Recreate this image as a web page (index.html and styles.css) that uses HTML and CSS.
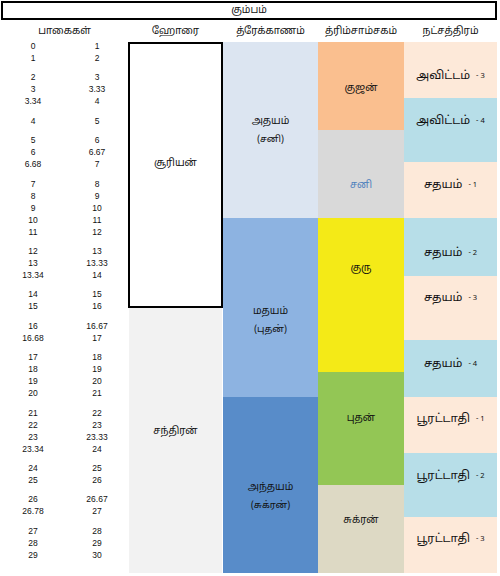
FILE: index.html
```html
<!DOCTYPE html>
<html lang="ta">
<head>
<meta charset="utf-8">
<title>கும்பம்</title>
<link rel="stylesheet" href="styles.css">
</head>
<body>
<div class="page">
  <div class="title">கும்பம்</div>
  <div class="heads">
    <div>பாகைகள்</div>
    <div>ஹோரை</div>
    <div>த்ரேக்காணம்</div>
    <div>த்ரிம்சாம்சகம்</div>
    <div>நட்சத்திரம்</div>
  </div>
  <div class="table">
    <div class="degrees">
      <div class="grp"><div class="r"><span>0</span><span>1</span></div><div class="r"><span>1</span><span>2</span></div></div>
      <div class="grp"><div class="r"><span>2</span><span>3</span></div><div class="r"><span>3</span><span>3.33</span></div><div class="r"><span>3.34</span><span>4</span></div></div>
      <div class="grp"><div class="r"><span>4</span><span>5</span></div></div>
      <div class="grp"><div class="r"><span>5</span><span>6</span></div><div class="r"><span>6</span><span>6.67</span></div><div class="r"><span>6.68</span><span>7</span></div></div>
      <div class="grp"><div class="r"><span>7</span><span>8</span></div><div class="r"><span>8</span><span>9</span></div><div class="r"><span>9</span><span>10</span></div><div class="r"><span>10</span><span>11</span></div><div class="r"><span>11</span><span>12</span></div></div>
      <div class="grp"><div class="r"><span>12</span><span>13</span></div><div class="r"><span>13</span><span>13.33</span></div><div class="r"><span>13.34</span><span>14</span></div></div>
      <div class="grp"><div class="r"><span>14</span><span>15</span></div><div class="r"><span>15</span><span>16</span></div></div>
      <div class="grp"><div class="r"><span>16</span><span>16.67</span></div><div class="r"><span>16.68</span><span>17</span></div></div>
      <div class="grp"><div class="r"><span>17</span><span>18</span></div><div class="r"><span>18</span><span>19</span></div><div class="r"><span>19</span><span>20</span></div><div class="r"><span>20</span><span>21</span></div></div>
      <div class="grp"><div class="r"><span>21</span><span>22</span></div><div class="r"><span>22</span><span>23</span></div><div class="r"><span>23</span><span>23.33</span></div><div class="r"><span>23.34</span><span>24</span></div></div>
      <div class="grp"><div class="r"><span>24</span><span>25</span></div><div class="r"><span>25</span><span>26</span></div></div>
      <div class="grp"><div class="r"><span>26</span><span>26.67</span></div><div class="r"><span>26.78</span><span>27</span></div></div>
      <div class="grp"><div class="r"><span>27</span><span>28</span></div><div class="r"><span>28</span><span>29</span></div><div class="r"><span>29</span><span>30</span></div></div>
    </div>
    <div class="hora">
      <div class="cell surya">சூரியன்</div>
      <div class="cell chandra">சந்திரன்</div>
    </div>
    <div class="drek">
      <div class="cell d1"><span>அதயம்</span><span class="sub">(சனி)</span></div>
      <div class="cell d2"><span>மதயம்</span><span class="sub">(புதன்)</span></div>
      <div class="cell d3"><span>அந்தயம்</span><span class="sub">(சுக்ரன்)</span></div>
    </div>
    <div class="trim">
      <div class="cell kujan">குஜன்</div>
      <div class="cell sani">சனி</div>
      <div class="cell guru">குரு</div>
      <div class="cell budhan">புதன்</div>
      <div class="cell sukran">சுக்ரன்</div>
    </div>
    <div class="nak">
      <div class="cell peach n1">அவிட்டம் <small>- 3</small></div>
      <div class="cell blue n2">அவிட்டம் <small>- 4</small></div>
      <div class="cell peach n3">சதயம் <small>- 1</small></div>
      <div class="cell blue n4">சதயம் <small>- 2</small></div>
      <div class="cell peach n5">சதயம் <small>- 3</small></div>
      <div class="cell blue n6">சதயம் <small>- 4</small></div>
      <div class="cell peach n7">பூரட்டாதி <small>- 1</small></div>
      <div class="cell blue n8">பூரட்டாதி <small>- 2</small></div>
      <div class="cell peach n9">பூரட்டாதி <small>- 3</small></div>
    </div>
  </div>
</div>
</body>
</html>
```
FILE: styles.css
```css
* { box-sizing: border-box; }
html, body { margin: 0; padding: 0; background: #fff; }
body {
  font-family: "Noto Sans Tamil", "Latha", "Lohit Tamil", "Noto Sans", "Liberation Sans", sans-serif;
  color: #111;
  width: 500px;
  height: 576px;
  overflow: hidden;
}
.page { padding: 1px 3px 0 1px; }
.title {
  height: 19px;
  border: 2px solid #000;
  display: flex;
  align-items: center;
  justify-content: center;
  font-size: 10px;
}
.heads {
  display: grid;
  grid-template-columns: 127px 95px 95px 86px 93px;
  height: 22px;
  align-items: center;
  font-size: 10px;
  text-align: center;
}
.table {
  display: grid;
  grid-template-columns: 127px 95px 95px 86px 93px;
  height: 531px;
}
.degrees {
  font-family: "Liberation Sans", Arial, sans-serif;
  font-size: 8.5px;
  margin-top: -2px;
  display: flex;
  flex-direction: column;
  gap: 7.4px;
}
.r { display: grid; grid-template-columns: 64px 64px; line-height: 12px; text-align: center; }
.cell {
  display: flex;
  flex-direction: column;
  align-items: center;
  justify-content: center;
}
.hora { display: grid; grid-template-rows: 266px 265px; font-size: 10px; }
.surya { border: 2px solid #000; background: #fff; padding-bottom: 24px; }
.chandra { background: #f2f2f2; margin: 0 1px; padding-bottom: 18px; }
.drek { display: grid; grid-template-rows: 176px 179px 176px; font-size: 10px; }
.drek .sub { font-size: 9.5px; margin-top: 6px; }
.d1 { background: #dce5f1; }
.d2 { background: #8db3e1; padding-top: 26px; }
.d3 { background: #588cc9; padding-top: 22px; }
.trim { display: grid; grid-template-rows: 88px 88px 154px 113px 88px; font-size: 10px; }
.kujan { background: #fabf8f; padding-top: 4px; }
.sani { background: #d9d9d9; color: #4f81bd; padding-top: 22px; }
.guru { background: #f4ea17; padding-bottom: 54px; }
.budhan { background: #93c655; padding-bottom: 20px; }
.sukran { background: #ddd9c4; padding-bottom: 18px; }
.nak { display: grid; grid-template-rows: 56px 64px 56px 58px 64px 57px 56px 64px 56px; font-size: 11.5px; }
.nak .cell { flex-direction: row; }
.nak small { font-size: 7.5px; margin-left: 6px; }
.peach { background: #fde9d9; }
.blue { background: #b7dee8; }
.n1 { padding-top: 12px; }
.n2 { padding-bottom: 18px; }
.n3 { padding-bottom: 10px; }
.n4 { padding-top: 12px; }
.n5 { padding-bottom: 20px; }
.n6 { padding-bottom: 10px; }
.n7 { padding-bottom: 12px; }
.n8 { padding-bottom: 18px; }
.n9 { padding-bottom: 12px; }
```
